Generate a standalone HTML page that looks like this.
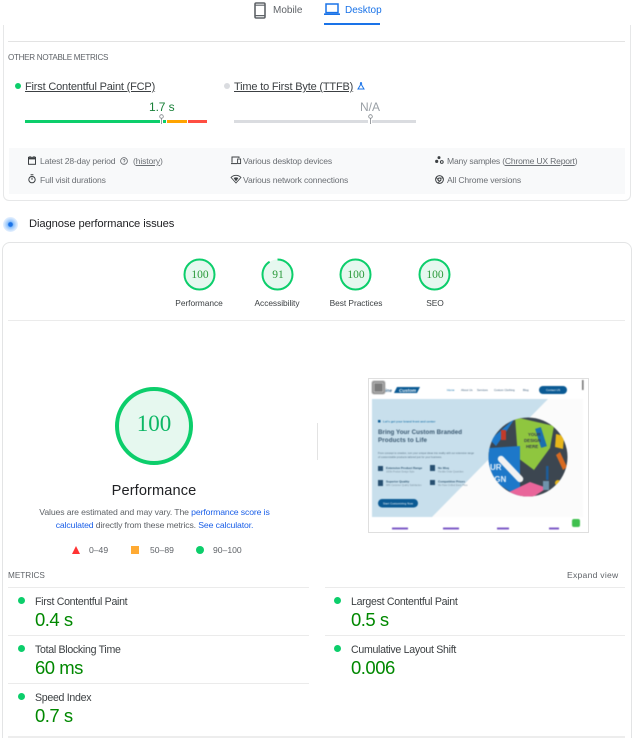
<!DOCTYPE html>
<html><head><meta charset="utf-8">
<style>
html,body{margin:0;padding:0;background:#fff;width:640px;height:738px;overflow:hidden;}
#w{position:relative;width:640px;height:738px;overflow:hidden;font-family:"Liberation Sans",sans-serif;color:#3c4043;filter:blur(.25px);}
.a{position:absolute;white-space:nowrap;}
.u{text-decoration:underline;}
.g{color:#6b6f74;font-size:8.6px;letter-spacing:-.15px;line-height:12px;}
.dot{position:absolute;border-radius:50%;background:#0cce6b;}
.line{position:absolute;background:#ebebeb;height:1px;}
.ml{font-size:10.6px;color:#3c4043;line-height:14px;letter-spacing:-.3px;}
.mv{font-size:18.5px;color:#008800;line-height:22px;letter-spacing:-.5px;}
.sl{font-size:8.4px;color:#3c4043;line-height:12px;text-align:center;width:80px;letter-spacing:-.05px;}
.sn{font-family:"Liberation Serif",serif;font-size:11.5px;color:#2a9a3a;text-align:center;width:34px;line-height:35px;}
svg{position:absolute;overflow:visible;}
</style></head><body><div id="w">

<!-- tabs -->
<svg style="left:254px;top:2px" width="12" height="17" viewBox="0 0 12 17"><rect x="1" y="1" width="10" height="15" rx="1.2" fill="none" stroke="#5f6368" stroke-width="1.6"/><path d="M1 3.2h10M1 13.6h10" stroke="#5f6368" stroke-width="1.2"/></svg>
<div class="a" style="left:273px;top:4px;font-size:10px;line-height:14px;color:#5f6368;letter-spacing:0;">Mobile</div>
<svg style="left:324px;top:3px" width="16" height="13" viewBox="0 0 16 13"><rect x="2" y="1" width="12" height="8.6" fill="none" stroke="#1a73e8" stroke-width="1.5"/><path d="M0 11.2h16" stroke="#1a73e8" stroke-width="1.6"/></svg>
<div class="a" style="left:345px;top:4px;font-size:10px;line-height:14px;color:#1a73e8;letter-spacing:0;">Desktop</div>
<div class="a" style="left:324px;top:23px;width:56px;height:2px;background:#1a73e8;"></div>

<!-- card 1 -->
<div class="a" style="left:3px;top:25px;width:626px;height:175px;border:1px solid #e6e7e8;border-top:0;border-radius:0 0 6px 6px;"></div>
<div class="line" style="left:8px;top:41px;width:617px;background:#e3e3e3;"></div>
<div class="a" style="left:8px;top:52px;font-size:8.1px;line-height:12px;color:#5f6368;letter-spacing:-.3px;">OTHER NOTABLE METRICS</div>

<div class="dot" style="left:15px;top:83px;width:6px;height:6px;"></div>
<div class="a u" style="left:25px;top:80px;font-size:11px;line-height:14px;color:#3c4043;letter-spacing:-.18px;">First Contentful Paint (FCP)</div>
<div class="dot" style="left:224px;top:83px;width:6px;height:6px;background:#dadce0;"></div>
<div class="a u" style="left:234px;top:80px;font-size:11px;line-height:14px;color:#3c4043;letter-spacing:-.18px;">Time to First Byte (TTFB)</div>
<svg style="left:357px;top:82px" width="8" height="8" viewBox="0 0 8 8"><path d="M3 .8h2M3.4 1v2L1 7h6L4.6 3V1" fill="none" stroke="#1a73e8" stroke-width="1"/></svg>

<div class="a" style="left:149px;top:100px;font-size:12px;line-height:15px;color:#188038;letter-spacing:-.1px;">1.7 s</div>
<div class="a" style="left:360px;top:100px;font-size:12px;line-height:15px;color:#9aa0a6;">N/A</div>

<div class="a" style="left:25px;top:120px;width:135px;height:3.4px;background:#0cce6b;"></div>
<div class="a" style="left:163px;top:120px;width:3px;height:3.4px;background:#0cce6b;"></div>
<div class="a" style="left:167px;top:120px;width:20px;height:3.4px;background:#ffa400;"></div>
<div class="a" style="left:188px;top:120px;width:19px;height:3.4px;background:#ff4e42;"></div>
<svg style="left:159px;top:114px" width="5" height="10" viewBox="0 0 5 10"><circle cx="2.5" cy="2.5" r="1.8" fill="#fff" stroke="#80868b" stroke-width=".8"/><path d="M2.5 4.3V10" stroke="#80868b" stroke-width=".8"/></svg>

<div class="a" style="left:234px;top:120px;width:134px;height:3.4px;background:#dadce0;"></div>
<div class="a" style="left:372px;top:120px;width:44px;height:3.4px;background:#dadce0;"></div>
<svg style="left:368px;top:114px" width="5" height="10" viewBox="0 0 5 10"><circle cx="2.5" cy="2.5" r="1.8" fill="#fff" stroke="#80868b" stroke-width=".8"/><path d="M2.5 4.3V10" stroke="#80868b" stroke-width=".8"/></svg>

<!-- grey panel -->
<div class="a" style="left:9px;top:148px;width:616px;height:46px;background:#f8f9fa;"></div>

<svg style="left:28px;top:156px" width="8" height="9" viewBox="0 0 8 9"><rect x=".5" y="1.3" width="7" height="7" fill="none" stroke="#3c4043" stroke-width="1"/><path d="M.5 2.6h7" stroke="#3c4043" stroke-width="1.6"/><path d="M2 0v1.4M6 0v1.4" stroke="#3c4043"/></svg>
<div class="a g" style="left:40px;top:155px;">Latest 28-day period</div>
<svg style="left:120px;top:157px" width="8" height="8" viewBox="0 0 8 8"><circle cx="4" cy="4" r="3.4" fill="none" stroke="#5f6368" stroke-width=".8"/><path d="M3 3.2a1 1 0 1 1 1.4 1L4 4.8M4 5.6v.8" fill="none" stroke="#5f6368" stroke-width=".7"/></svg>
<div class="a g" style="left:133px;top:155px;">(<span class="u">history</span>)</div>
<svg style="left:28px;top:174px" width="8" height="10" viewBox="0 0 8 10"><circle cx="4" cy="5.6" r="3.2" fill="none" stroke="#3c4043" stroke-width="1"/><path d="M2.6.8h2.8M4 3.6v2.2" stroke="#3c4043" stroke-width="1"/></svg>
<div class="a g" style="left:40px;top:174px;">Full visit durations</div>

<svg style="left:231px;top:156px" width="10" height="9" viewBox="0 0 10 9"><path d="M1 6.8V1h7v1" fill="none" stroke="#3c4043" stroke-width="1"/><path d="M0 7.6h6" stroke="#3c4043" stroke-width="1"/><rect x="6.6" y="3" width="3" height="4.6" fill="none" stroke="#3c4043" stroke-width=".9"/></svg>
<div class="a g" style="left:243px;top:155px;">Various desktop devices</div>
<svg style="left:231px;top:175px" width="10" height="8" viewBox="0 0 10 8"><path d="M0 2.4C3 -.4 7 -.4 10 2.4L5 8z" fill="none" stroke="#3c4043" stroke-width=".8"/><path d="M2.6 3C4 2.2 6 2.2 7.4 3L5 6.4z" fill="#3c4043"/></svg>
<div class="a g" style="left:243px;top:174px;">Various network connections</div>

<svg style="left:435px;top:156px" width="9" height="9" viewBox="0 0 9 9"><circle cx="4" cy="1.6" r="1.5" fill="#3c4043"/><circle cx="1.7" cy="5.4" r="1.6" fill="#3c4043"/><circle cx="6.8" cy="6" r="1.4" fill="none" stroke="#3c4043"/></svg>
<div class="a g" style="left:447px;top:155px;letter-spacing:-.2px;">Many samples (<span class="u">Chrome UX Report</span>)</div>
<svg style="left:435px;top:175px" width="9" height="9" viewBox="0 0 9 9"><circle cx="4.5" cy="4.5" r="3.9" fill="none" stroke="#3c4043" stroke-width="1"/><circle cx="4.5" cy="4.5" r="1.5" fill="none" stroke="#3c4043" stroke-width=".9"/><path d="M1.5 2.4 3.6 5.8M8 3H4.5M3 8 5.8 5" stroke="#3c4043" stroke-width=".8"/></svg>
<div class="a g" style="left:447px;top:174px;">All Chrome versions</div>

<!-- diagnose -->
<div class="a" style="left:3px;top:217px;width:15px;height:15px;border-radius:50%;background:radial-gradient(circle,#1a73e8 0 1.8px,#8fc2fb 3px,#cfe4fd 6px,#e6f1fe 7.5px);"></div>
<div class="a" style="left:29px;top:217px;font-size:11.2px;line-height:15px;color:#202124;letter-spacing:-.1px;">Diagnose performance issues</div>

<!-- card 2 -->
<div class="a" style="left:2px;top:242px;width:628px;height:510px;border:1px solid #e3e4e5;border-radius:8px;"></div>

<!-- small gauges -->
<svg style="left:183px;top:258px" width="33" height="33" viewBox="0 0 33 33"><circle cx="16.5" cy="16.5" r="15" fill="#e6f8ef" stroke="#0cce6b" stroke-width="2"/></svg>
<div class="a sn" style="left:183px;top:258px;">100</div>
<svg style="left:261px;top:258px" width="33" height="33" viewBox="0 0 33 33"><circle cx="16.5" cy="16.5" r="15" fill="#e6f8ef"/><circle cx="16.5" cy="16.5" r="15" fill="none" stroke="#0cce6b" stroke-width="2" stroke-dasharray="85.8 94.2" transform="rotate(-90 16.5 16.5)"/></svg>
<div class="a sn" style="left:261px;top:258px;">91</div>
<svg style="left:339px;top:258px" width="33" height="33" viewBox="0 0 33 33"><circle cx="16.5" cy="16.5" r="15" fill="#e6f8ef" stroke="#0cce6b" stroke-width="2"/></svg>
<div class="a sn" style="left:339px;top:258px;">100</div>
<svg style="left:418px;top:258px" width="33" height="33" viewBox="0 0 33 33"><circle cx="16.5" cy="16.5" r="15" fill="#e6f8ef" stroke="#0cce6b" stroke-width="2"/></svg>
<div class="a sn" style="left:418px;top:258px;">100</div>

<div class="a sl" style="left:159px;top:297px;">Performance</div>
<div class="a sl" style="left:237px;top:297px;">Accessibility</div>
<div class="a sl" style="left:316px;top:297px;">Best Practices</div>
<div class="a sl" style="left:395px;top:297px;">SEO</div>
<div class="line" style="left:8px;top:320px;width:617px;"></div>

<!-- big gauge -->
<svg style="left:115px;top:387px" width="78" height="78" viewBox="0 0 78 78"><circle cx="39" cy="39" r="37" fill="#e6f8ef" stroke="#0cce6b" stroke-width="4"/></svg>
<div class="a" style="left:115px;top:387px;width:78px;line-height:74px;text-align:center;font-family:'Liberation Serif',serif;font-size:23px;color:#0cb765;">100</div>
<div class="a" style="left:54px;top:482px;width:200px;text-align:center;font-size:14.6px;line-height:18px;color:#202124;letter-spacing:.1px;">Performance</div>
<div class="a" style="left:20px;top:506px;width:269px;text-align:center;font-size:8.7px;line-height:13px;color:#5f6368;letter-spacing:-.13px;">Values are estimated and may vary. The <span style="color:#1a5fe8">performance score is</span></div>
<div class="a" style="left:20px;top:519px;width:269px;text-align:center;font-size:8.7px;line-height:13px;color:#5f6368;letter-spacing:-.13px;"><span style="color:#1a5fe8">calculated</span> directly from these metrics. <span style="color:#1a5fe8">See calculator.</span></div>

<svg style="left:72px;top:546px" width="8" height="8" viewBox="0 0 8 8"><path d="M4 0 8 8H0z" fill="#ff3333"/></svg>
<div class="a" style="left:89px;top:544px;font-size:8.6px;line-height:12px;color:#5f6368;">0–49</div>
<div class="a" style="left:131px;top:546px;width:8px;height:8px;background:#ffaa33;"></div>
<div class="a" style="left:150px;top:544px;font-size:8.6px;line-height:12px;color:#5f6368;">50–89</div>
<div class="dot" style="left:196px;top:546px;width:8px;height:8px;"></div>
<div class="a" style="left:213px;top:544px;font-size:8.6px;line-height:12px;color:#5f6368;">90–100</div>

<div class="a" style="left:317px;top:423px;width:1px;height:37px;background:#e3e3e3;"></div>

<!-- screenshot thumb -->
<div class="a" style="left:368px;top:378px;width:221px;height:155px;outline:1px solid #dfdfdf;outline-offset:-1px;"></div>
<svg style="left:368px;top:378px;filter:blur(.45px)" width="221" height="155" viewBox="0 0 221 155" font-family="Liberation Sans, sans-serif">
<defs><clipPath id="c"><circle cx="160" cy="79" r="39.5"/></clipPath></defs>
<rect x="4" y="21" width="211" height="118" fill="#fbfbfb"/>
<path d="M4 21H180L64 139H4z" fill="#c8dfec"/>
<path d="M29 9H52L49 15H26z" fill="#0a5a94"/>
<text x="31" y="14" font-size="4.6" font-style="italic" font-weight="bold" fill="#fff">Custom</text>
<text x="16" y="14" font-size="4.6" font-style="italic" font-weight="bold" fill="#3e6d92">line</text>
<g font-size="2.8" fill="#3a5a78"><text x="79" y="13" fill="#0a6aa8">Home</text><text x="93" y="13">About Us</text><text x="109" y="13">Services</text><text x="126" y="13">Custom Clothing</text><text x="155" y="13">Blog</text></g>
<rect x="171" y="8" width="28" height="8" rx="4" fill="#0a5a94"/>
<text x="178" y="13" font-size="2.8" fill="#fff">Contact US</text>
<rect x="214" y="2" width="1.6" height="10" fill="#777"/>
<rect x="4" y="3" width="13" height="13" rx="2" fill="#8a8a8a" stroke="#b5b5b5"/>
<rect x="6" y="5" width="9" height="9" fill="#7c7c7c" stroke="#ddd" stroke-width=".6"/>
<rect x="10" y="42" width="2.5" height="2.5" fill="#0a5a94"/>
<text x="15" y="44.5" font-size="3" font-weight="bold" fill="#2e7fb0">Let's get your brand front and center</text>
<g font-size="6.2" font-weight="bold" fill="#3a5870"><text x="10" y="56" textLength="84">Bring Your Custom Branded</text><text x="10" y="64" textLength="49">Products to Life</text></g>
<g font-size="2.6" fill="#5a7486"><text x="10" y="76" textLength="96">From concept to creation, turn your unique ideas into reality with our extensive range</text><text x="10" y="80" textLength="64">of customizable products tailored just for your business.</text></g>
<g fill="#274f70"><rect x="10" y="88" width="5" height="5"/><rect x="10" y="102" width="5" height="6"/><rect x="62" y="87" width="5" height="6"/><rect x="62" y="102" width="5" height="5"/></g>
<g font-size="3" font-weight="bold" fill="#2f5570"><text x="18" y="91">Extensive Product Range</text><text x="18" y="104.500">Superior Quality</text><text x="70" y="91">No Moq</text><text x="70" y="104.500">Competitive Prices</text></g>
<g font-size="2.3" fill="#7d93a2"><text x="18" y="94.500">1000s Product Design Style</text><text x="18" y="108">98% Customer Quality Satisfaction</text><text x="70" y="94.500">Flexible Order Quantities</text><text x="70" y="108">We Have Unified Every Price</text></g>
<rect x="10" y="121" width="40" height="8.500" rx="4.200" fill="#0a5a94"/>
<text x="15" y="126.500" font-size="2.800" fill="#fff" textLength="30">Start Customizing Now</text>
<g clip-path="url(#c)">
<rect x="120" y="39" width="80" height="80" fill="#3c4650"/>
<path d="M147 39 186 48 182 70 166 92 150 80z" fill="#8fc63f"/>
<path d="M121 70 152 68 152 112 149 118 132 107 120 92z" fill="#1d78c9"/>
<path d="M122 62 147 40 138 54 128 68z" fill="#1d78c9"/>
<path d="M139 115 162 104 179 110 165 119 149 120z" fill="#e9659a"/>
<path d="M133 81 152 101" stroke="#f2f2f2" stroke-width="6.500" stroke-linecap="round"/>
<path d="M170 50 176 69" stroke="#1a6fb0" stroke-width="6"/>
<rect x="133" y="52" width="5" height="10" fill="#c33b2a"/>
<path d="M188 56 196 58 195 71 187 69z" fill="#e8b61a"/>
<path d="M188 77 192 74 199 89 195 92z" fill="#d86a22"/>
<rect x="178" y="88" width="2.500" height="14" fill="#1d5d9a"/>
<rect x="175" y="103" width="6" height="9" fill="#6f93ab"/>
<circle cx="190" cy="105" r="3" fill="#e8b61a"/>
<g font-size="4.400" font-weight="bold" fill="#39424a"><text x="160" y="58">YOUR</text><text x="156" y="64">DESIGN</text><text x="158" y="70">HERE</text></g>
<g font-size="8" font-weight="bold" fill="#eaf3fb"><text x="122" y="92">UR</text><text x="124" y="104">IGN</text></g>
</g>
<g fill="#7d5bc7"><rect x="24" y="149.500" width="16" height="2"/><rect x="75" y="149.500" width="16" height="2"/><rect x="129" y="149.500" width="12" height="2"/><rect x="181" y="149.500" width="10" height="2"/></g>
<rect x="204" y="141" width="8" height="8" rx="2" fill="#3fc04e"/>
</svg>

<!-- metrics -->
<div class="a" style="left:8px;top:570px;font-size:8.2px;line-height:12px;color:#5f6368;letter-spacing:0;">METRICS</div>
<div class="a" style="left:567px;top:569px;font-size:8.6px;line-height:12px;color:#5f6368;letter-spacing:.25px;">Expand view</div>
<div class="line" style="left:8px;top:587px;width:301px;"></div>
<div class="line" style="left:325px;top:587px;width:300px;"></div>

<div class="dot" style="left:18px;top:597px;width:7px;height:7px;"></div>
<div class="a ml" style="left:35px;top:595px;">First Contentful Paint</div>
<div class="a mv" style="left:35px;top:609px;">0.4 s</div>
<div class="line" style="left:8px;top:635px;width:301px;"></div>

<div class="dot" style="left:18px;top:645px;width:7px;height:7px;"></div>
<div class="a ml" style="left:35px;top:643px;">Total Blocking Time</div>
<div class="a mv" style="left:35px;top:657px;">60 ms</div>
<div class="line" style="left:8px;top:683px;width:301px;"></div>

<div class="dot" style="left:18px;top:693px;width:7px;height:7px;"></div>
<div class="a ml" style="left:35px;top:691px;">Speed Index</div>
<div class="a mv" style="left:35px;top:705px;">0.7 s</div>

<div class="dot" style="left:334px;top:597px;width:7px;height:7px;"></div>
<div class="a ml" style="left:351px;top:595px;">Largest Contentful Paint</div>
<div class="a mv" style="left:351px;top:609px;">0.5 s</div>
<div class="line" style="left:325px;top:635px;width:300px;"></div>

<div class="dot" style="left:334px;top:645px;width:7px;height:7px;"></div>
<div class="a ml" style="left:351px;top:643px;">Cumulative Layout Shift</div>
<div class="a mv" style="left:351px;top:657px;">0.006</div>

<div class="a" style="left:8px;top:736px;width:617px;height:2px;background:#ededed;"></div>
</div></body></html>
